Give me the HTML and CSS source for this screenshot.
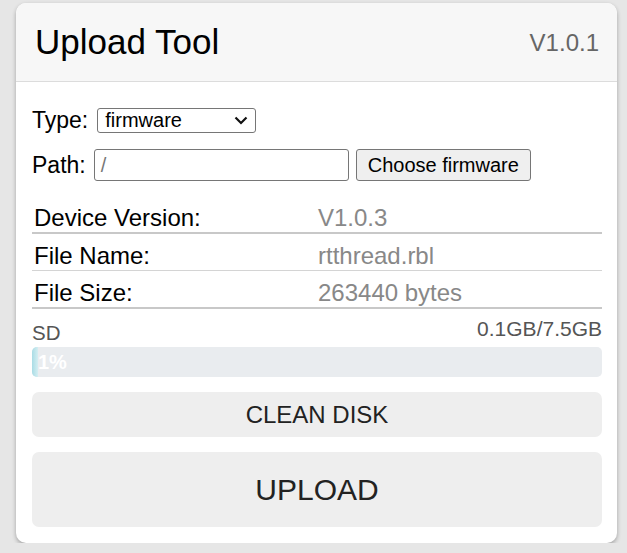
FILE: index.html
```html
<!DOCTYPE html>
<html>
<head>
<meta charset="utf-8">
<link rel="stylesheet" href="styles.css">
</head>
<body>
<div class="card">
  <div class="header">
    <div class="title">Upload Tool</div>
    <div class="version">V1.0.1</div>
  </div>
  <div class="content">
    <div class="form-row row-type">
      <label class="label">Type:</label>
      <div class="select">
        <span>firmware</span>
        <svg class="chev" width="14" height="9" viewBox="0 0 14 9"><path d="M1.5 1.5 L7 7 L12.5 1.5" fill="none" stroke="#111" stroke-width="2.2"/></svg>
      </div>
    </div>
    <div class="form-row row-path">
      <label class="label">Path:</label>
      <div class="input">/</div>
      <div class="choose">Choose firmware</div>
    </div>
    <div class="info">
      <div class="info-row thick"><div class="k">Device Version:</div><div class="v">V1.0.3</div></div>
      <div class="info-row thin"><div class="k">File Name:</div><div class="v">rtthread.rbl</div></div>
      <div class="info-row thick"><div class="k">File Size:</div><div class="v">263440 bytes</div></div>
    </div>
    <div class="disk">
      <div class="disk-head"><span class="sd">SD</span><span class="cap">0.1GB/7.5GB</span></div>
      <div class="bar"><div class="fill" style="width:1%"></div><span class="pct">1%</span></div>
    </div>
    <div class="btn clean">CLEAN DISK</div>
    <div class="btn upload">UPLOAD</div>
  </div>
</div>
</body>
</html>
```
FILE: styles.css
```css
html, body { margin: 0; padding: 0; }
body {
  background: #e6e6e6;
  font-family: "Liberation Sans", Arial, sans-serif;
  padding: 3px 0 0 16px;
}
.card {
  width: 601px;
  height: 540px;
  background: #fff;
  border-radius: 10px;
  box-shadow: 0 2px 4px rgba(0,0,0,0.3);
  overflow: hidden;
  box-sizing: border-box;
}
.header {
  height: 79px;
  background: #f7f7f7;
  border-bottom: 1px solid #dcdcdc;
  display: flex;
  align-items: center;
  justify-content: space-between;
  padding: 0 18px 0 19px;
  box-sizing: border-box;
}
.title { font-size: 35px; color: #000; }
.version { font-size: 24px; color: #666; margin-top: 2px; }
.content {
  padding: 26px 15px 0 16px;
}
.form-row {
  display: flex;
  align-items: center;
}
.row-type { height: 25px; }
.row-path { height: 32px; margin-top: 16px; }
.label { font-size: 23px; color: #000; margin-right: 7px; }
.row-type .label { margin-right: 9px; }
.row-path .label { margin-right: 8px; }
.select {
  width: 159px;
  height: 25px;
  box-sizing: border-box;
  border: 1px solid #767676;
  border-radius: 3px;
  display: flex;
  align-items: center;
  justify-content: space-between;
  padding: 0 7px 0 7px;
  font-size: 20px;
}
.input {
  width: 255px;
  height: 32px;
  box-sizing: border-box;
  border: 1px solid #767676;
  border-radius: 3px;
  font-size: 20px;
  color: #777;
  padding: 0 6px;
  line-height: 30px;
}
.choose {
  margin-left: 7px;
  height: 32px;
  box-sizing: border-box;
  border: 1px solid #767676;
  border-radius: 3px;
  background: #efefef;
  font-size: 20px;
  padding: 0 11px;
  display: flex;
  align-items: center;
}
.info { margin-top: 15px; }
.info-row {
  display: flex;
  padding-top: 8px;
  line-height: 28px;
  padding-left: 2px;
  font-size: 24px;
}
.info-row.thick { border-bottom: 2px solid #c8c8c8; }
.info-row.thin { border-bottom: 1px solid #d4d4d4; }
.k { width: 284px; color: #000; }
.v { color: #888; }
.disk { margin-top: 10px; }
.disk-head {
  display: flex;
  justify-content: space-between;
  color: #555;
  font-size: 21px;
  height: 28px;
  line-height: 20px;
}
.sd { margin-top: 4px; font-size: 20.5px; }
.bar {
  position: relative;
  height: 30px;
  background: #e9ecef;
  border-radius: 5px;
  overflow: hidden;
}
.fill { height: 100%; background: linear-gradient(90deg, #a9dce5, #d4eef2); }
.pct {
  position: absolute;
  left: 6px;
  top: 4px;
  font-size: 20px;
  line-height: 22px;
  color: #fff;
  font-weight: bold;
}
.btn {
  background: #eeeeee;
  border-radius: 7px;
  display: flex;
  align-items: center;
  justify-content: center;
  color: #222;
}
.clean { margin-top: 15px; height: 45px; font-size: 24px; }
.upload { margin-top: 15px; height: 75px; font-size: 30px; }
```
